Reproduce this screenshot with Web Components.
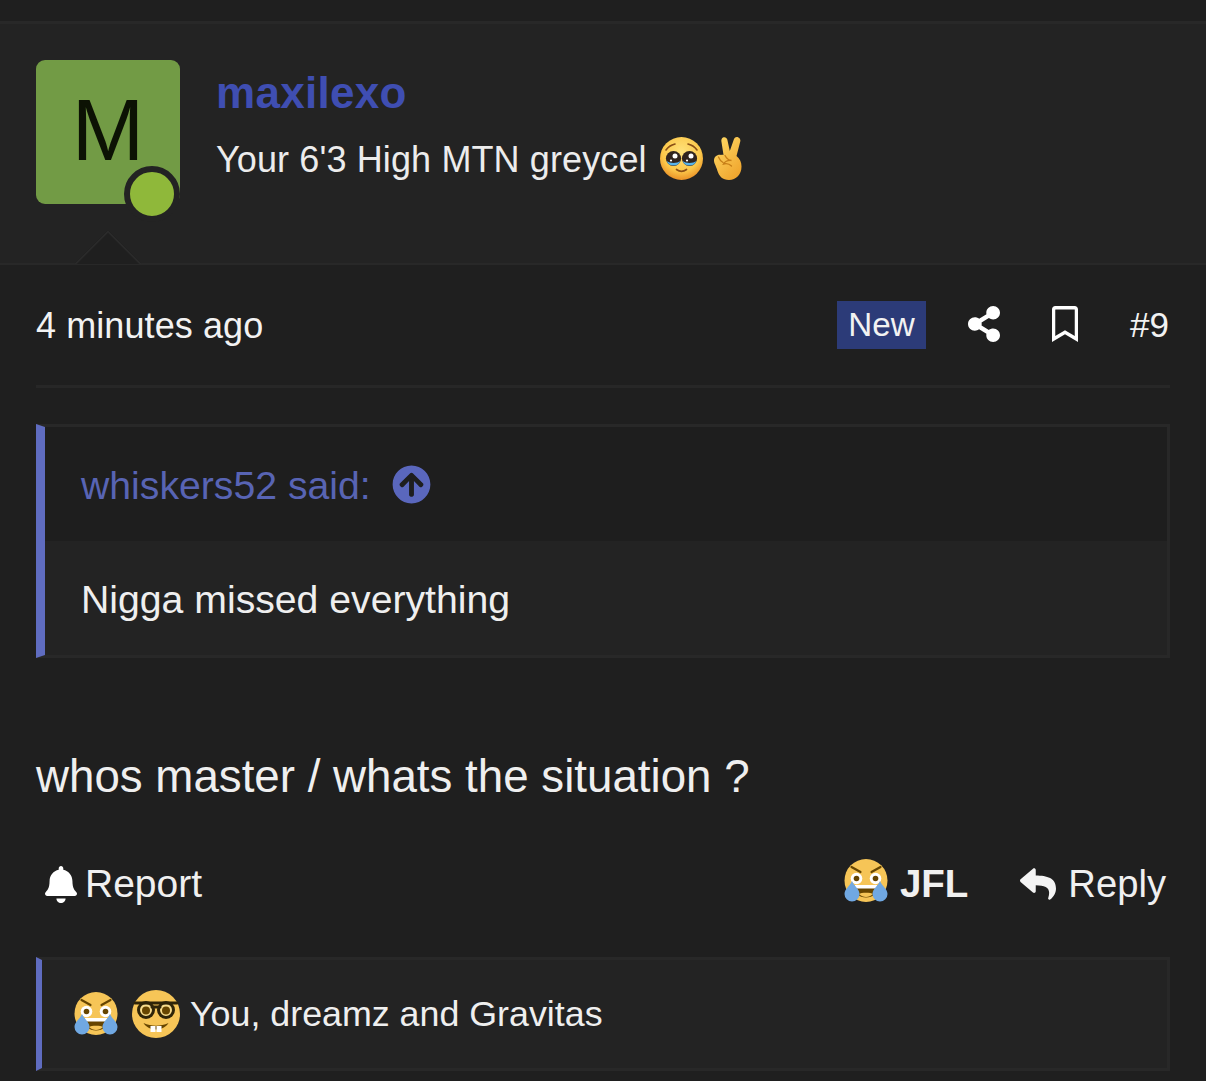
<!DOCTYPE html>
<html lang="en"><head><meta charset="utf-8"><title>Post</title>
<style>
html,body{margin:0;padding:0;background:#1f1f1f}
body{font-family:"Liberation Sans",Arial,sans-serif;color:#efefef;width:1206px;height:1081px;overflow:hidden}
</style></head><body>
<forum-post>
  <post-header slot="header" name="maxilexo" status="Your 6'3 High MTN greycel" letter="M"></post-header>
  <post-meta time="4 minutes ago" num="#9"></post-meta>
  <post-quote author="whiskers52 said:">Nigga missed everything</post-quote>
  <post-text>whos master / whats the situation ?</post-text>
  <post-actions></post-actions>
  <post-reactions>You, dreamz and Gravitas</post-reactions>
</forum-post>
<script>
const ICONS={
share:['0 0 448 512','M352 320c-22.608 0-43.387 7.819-59.79 20.895l-102.486-64.054a96.551 96.551 0 0 0 0-41.683l102.486-64.054C308.613 184.181 329.392 192 352 192c53.019 0 96-42.981 96-96S405.019 0 352 0s-96 42.981-96 96c0 7.158.79 14.13 2.276 20.841L155.79 180.895C139.387 167.819 118.608 160 96 160c-53.019 0-96 42.981-96 96s42.981 96 96 96c22.608 0 43.387-7.819 59.79-20.895l102.486 64.054A96.301 96.301 0 0 0 256 416c0 53.019 42.981 96 96 96s96-42.981 96-96-42.981-96-96-96z'],
bookmark:['0 0 384 512','M336 0H48C21.49 0 0 21.49 0 48v464l192-112 192 112V48c0-26.51-21.49-48-48-48zm0 428.43l-144-84-144 84V54a6 6 0 0 1 6-6h276c3.314 0 6 2.683 6 5.996V428.43z'],
bell:['0 0 448 512','M224 512c35.32 0 63.97-28.65 63.97-64H160.03c0 35.35 28.65 64 63.97 64zm215.39-149.71c-19.32-20.76-55.47-51.99-55.47-154.29 0-77.7-54.48-139.9-127.94-155.16V32c0-17.67-14.32-32-31.98-32s-31.98 14.33-31.98 32v20.84C118.56 68.1 64.08 130.3 64.08 208c0 102.3-36.15 133.53-55.47 154.29-6 6.45-8.66 14.16-8.61 21.71.11 16.4 12.98 32 32.1 32h383.8c19.12 0 32-15.6 32.1-32 .05-7.55-2.61-15.27-8.61-21.71z'],
reply:['0 0 512 512','M8.309 189.836L184.313 37.851C199.719 24.546 224 35.347 224 56.015v80.053c160.629 1.839 288 34.032 288 186.258 0 61.441-39.581 122.309-83.333 154.132-13.653 9.931-33.111-2.533-28.077-18.631 45.344-145.012-21.507-183.51-176.59-185.742V360c0 20.7-24.3 31.453-39.687 18.164l-176.004-152c-11.071-9.562-11.086-26.753 0-36.328z'],
up:['0 0 512 512','M8 256C8 119 119 8 256 8s248 111 248 248-111 248-248 248S8 393 8 256zm143.6 28.9l72.4-75.5V392c0 13.3 10.7 24 24 24h16c13.3 0 24-10.7 24-24V209.4l72.4 75.5c9.3 9.7 24.8 9.9 34.3.4l10.9-11c9.4-9.4 9.4-24.6 0-33.9L273 107.7c-9.4-9.4-24.6-9.4-33.9 0L106.3 240.4c-9.4 9.4-9.4 24.6 0 33.9l10.9 11c9.6 9.5 25.1 9.3 34.4-.4z']
};
const EMOJI={
pleading:`<svg viewBox="0 0 43 43"><defs><radialGradient id="pf" cx=".5" cy=".35" r=".68"><stop offset="0" stop-color="#ffe27c"/><stop offset=".65" stop-color="#fcc84a"/><stop offset="1" stop-color="#e88a22"/></radialGradient></defs>
<circle cx="21.5" cy="21.5" r="21.5" fill="url(#pf)"/>
<path d="M6 13c2-3 5-5 9-6M37 13c-2-3-5-5-9-6" stroke="#8a4f16" stroke-width="1.6" fill="none" stroke-linecap="round"/>
<circle cx="13.5" cy="21.5" r="7.6" fill="#30241e"/><circle cx="29.5" cy="21.5" r="7.6" fill="#30241e"/>
<path d="M6.6 24a7.5 7.5 0 0 0 13.8 0c-3 2.5-10.8 2.5-13.8 0z" fill="#58b4ea"/><path d="M22.6 24a7.5 7.5 0 0 0 13.8 0c-3 2.5-10.8 2.5-13.8 0z" fill="#58b4ea"/>
<circle cx="15" cy="19" r="2.5" fill="#fff"/><circle cx="31" cy="19" r="2.5" fill="#fff"/><circle cx="11" cy="23.5" r="1.1" fill="#fff"/><circle cx="27" cy="23.5" r="1.1" fill="#fff"/>
<path d="M16.5 32.5c3 2.2 7 2.2 10 0" stroke="#8a4f16" stroke-width="1.7" fill="none" stroke-linecap="round"/></svg>`,
victory:`<svg viewBox="0 0 28 43"><defs><linearGradient id="vg" x1="0" y1="0" x2=".7" y2="1"><stop offset="0" stop-color="#ffdc68"/><stop offset="1" stop-color="#f0a62e"/></linearGradient></defs>
<path d="M9 .6c1.800-1 3.800 0 4.300 2l2.500 11.400L20 2c.7-1.800 2.600-2.500 4.400-1.600 1.600.8 2.400 2.500 1.800 4.400L22.500 19c3.500 3 5 6 5 10.500C27.500 37.500 22 43 15 43 8.500 43 5 39 3.500 34 2.600 31 1.500 28.500.6 26.500-.5 23.500 0 21 1.500 19.500c1.800-1.500 3.700-2 5.500-1.500.9-.2 1.700-.2 2.500 0L7.500 5C7 3 7.700 1.400 9 .6z" fill="url(#vg)"/>
<path d="M4.500 20c1.200 3 2.500 4.500 4.500 5.500M11 18.500c1.500 3 3 4.500 6.500 5-3.500-.3-6.500 1-8 3.500 3-.8 6 0 8 2" stroke="#c67e17" stroke-width="1.3" fill="none" stroke-linecap="round"/></svg>`,
joy:`<svg viewBox="0 0 44 44"><circle cx="22" cy="21.5" r="21.5" fill="#f6c557"/>
<path d="M7.5 8l9 5M36.500 8l-9 5" stroke="#664500" stroke-width="2.2" stroke-linecap="round"/>
<circle cx="12.5" cy="19.5" r="5.8" fill="#fff"/><circle cx="31.5" cy="19.5" r="5.8" fill="#fff"/><circle cx="12.5" cy="19.5" r="2.800" fill="#664500"/><circle cx="31.500" cy="19.5" r="2.8" fill="#664500"/>
<path d="M10 26h24c0 8-5 12.500-12 12.500S10 34 10 26z" fill="#664500"/><path d="M10.300 26h23.400l-.8 3.500H11.100z" fill="#fff"/><path d="M15 35c2-1.800 12-1.800 14 0-2 2-4.500 3-7 3s-5-1-7-3z" fill="#f6c557"/>
<path d="M8 22c2 5 7.500 8 7.500 13a7.500 7.500 0 0 1-15 0c0-5 5.500-8 7.500-13zM36 22c-2 5-7.500 8-7.500 13a7.500 7.500 0 0 0 15 0c0-5-5.500-8-7.500-13z" fill="#70a8e2"/></svg>`,
nerd:`<svg viewBox="0 0 48 48"><circle cx="24" cy="24" r="24" fill="#f6c557"/>
<circle cx="14" cy="20" r="7.5" fill="#f7dc8c" stroke="#2e2408" stroke-width="3"/><circle cx="34" cy="20" r="7.5" fill="#f7dc8c" stroke="#2e2408" stroke-width="3"/>
<path d="M3 13h42M20 17h8" stroke="#2e2408" stroke-width="3" stroke-linecap="round"/>
<circle cx="14" cy="20.5" r="4" fill="#664500"/><circle cx="34" cy="20.5" r="4" fill="#664500"/>
<path d="M11.500 33c8 3.500 17 3.500 25 0-2.500 4-7 6.500-12.500 6.500S14 37 11.500 33z" fill="#664500"/><path d="M18.500 36h5v6h-5zM24.500 36h5v6h-5z" fill="#fff"/></svg>`
};
function def(name,css,html){
  customElements.define(name,class extends HTMLElement{
    connectedCallback(){
      if(this.shadowRoot)return;
      const a=k=>this.getAttribute(k)||'';
      this.attachShadow({mode:'open'}).innerHTML='<style>'+css+'</style>'+html(a);
    }
  });
}
def('ui-icon',':host{display:inline-flex;line-height:0}svg{height:100%;width:100%;fill:currentColor;display:block}',a=>{const i=ICONS[a('name')];return `<svg viewBox="${i[0]}" preserveAspectRatio="none"><path d="${i[1]}"/></svg>`});
def('ui-emoji',':host{display:inline-flex;line-height:0}svg{height:100%;width:100%;display:block}',a=>EMOJI[a('name')]);
def('forum-post',':host{display:block;padding-top:21px}',()=>'<slot name="header"></slot><slot></slot>');
def('post-header',`:host{display:flex;height:239px;background:#232323;border-top:3px solid #282828;border-bottom:2px solid #282828;padding:0 36px;position:relative}
.wrap{display:flex;gap:36px;padding-top:36px;height:144px}
.av{width:144px;height:144px;background:#729b45;border-radius:9px;display:flex;align-items:center;justify-content:center;font-size:87px;color:#0c1204;position:relative;line-height:1;padding-bottom:6px;box-sizing:border-box}
.dot{position:absolute;left:88px;top:106px;width:44px;height:44px;background:#8fb83a;border-radius:50%;border:6px solid #232323;box-sizing:content-box}
.name{font-size:44px;font-weight:700;color:#3f4eb2;line-height:50px;margin-top:8px;letter-spacing:.28px}
.st{display:flex;align-items:flex-start;font-size:36px;line-height:44px;margin-top:19px;color:#ececec;letter-spacing:.12px}
.st span{margin-top:1px}
.arrow{position:absolute;left:84px;top:216px;width:48px;height:48px;box-sizing:border-box;background:#1f1f1f;border-left:2px solid #2a2a2a;border-top:2px solid #2a2a2a;transform:rotate(45deg);clip-path:polygon(0 0,100% 0,0 100%)}
ui-emoji.p{width:43px;height:43px;margin-left:13px}ui-emoji.v{width:28px;height:43px;margin-left:11px}`,
a=>`<div class="wrap"><div class="av">${a('letter')}<span class="dot"></span></div><div><div class="name">${a('name')}</div><div class="st"><span>${a('status')}</span><ui-emoji class="p" name="pleading"></ui-emoji><ui-emoji class="v" name="victory"></ui-emoji></div></div></div><div class="arrow"></div>`);
def('post-meta',`:host{display:flex;align-items:center;height:118px;padding-top:2px;margin:0 36px;border-bottom:3px solid #272727;font-size:36px;color:#f2f2f2}
.t{flex:1;letter-spacing:.09px}.new{background:#2c3b78;font-size:33.2px;line-height:48px;height:48px;width:89px;text-align:center;box-sizing:border-box;margin-top:-2px}
.sh{width:32px;height:36px;margin-left:42px;color:#fff;margin-top:-4px}.bm{width:26px;height:36px;margin-left:52px;color:#fff;margin-top:-4px}.n{font-size:35px;margin-left:52px;margin-right:1px;margin-top:-2px}`,
a=>`<span class="t">${a('time')}</span><span class="new">New</span><ui-icon class="sh" name="share"></ui-icon><ui-icon class="bm" name="bookmark"></ui-icon><span class="n">${a('num')}</span>`);
def('post-quote',`:host{display:block;margin:36px 36px 0;border:3px solid #282828;border-left:9px solid #5f6cc0;font-size:39.2px}
.h,.b{height:114px;box-sizing:border-box;padding:3px 0 0 36px;display:flex;align-items:center}
.h{background:#1e1e1e;color:#5864b4;gap:21px}
.b{background:#232323;color:#efefef}
ui-icon{width:39px;height:39px;color:#5a67bd;margin-top:-2px}`,
a=>`<div class="h"><span>${a('author')}</span><ui-icon name="up"></ui-icon></div><div class="b"><slot></slot></div>`);
def('post-text',':host{display:block;margin:89px 36px 0;font-size:45.7px;line-height:60px;color:#efefef}',()=>'<slot></slot>');
def('post-actions',`:host{display:flex;align-items:center;height:60px;margin:47px 36px 0;font-size:39px;color:#f0f0f0}
.l{display:flex;align-items:center;flex:1;padding-left:9px;gap:8px}.bell{width:32px;height:37px;color:#fff}
.jfl{display:flex;align-items:center;font-weight:700;gap:12px;font-size:38.5px}.jfl ui-emoji{width:44px;height:44px;margin-bottom:6px}
.re{display:flex;align-items:center;gap:12px;margin-left:52px;margin-right:4px;font-size:38.2px}.re ui-icon{width:36px;height:36px;color:#f4f4f4}`,
()=>`<div class="l"><ui-icon class="bell" name="bell"></ui-icon><span>Report</span></div><div class="jfl"><ui-emoji name="joy"></ui-emoji><span>JFL</span></div><div class="re"><ui-icon name="reply"></ui-icon><span>Reply</span></div>`);
def('post-reactions',`:host{display:flex;align-items:center;height:108px;margin:43px 36px 0;background:#232323;border:3px solid #282828;border-left:6px solid #5f6cc0;padding-left:32px;font-size:35.8px;color:#efefef}
ui-emoji.j{width:44px;height:44px}ui-emoji.n{width:48px;height:48px;margin-left:14px;margin-right:10px}`,
()=>`<ui-emoji class="j" name="joy"></ui-emoji><ui-emoji class="n" name="nerd"></ui-emoji><slot></slot>`);
</script>
</body></html>
